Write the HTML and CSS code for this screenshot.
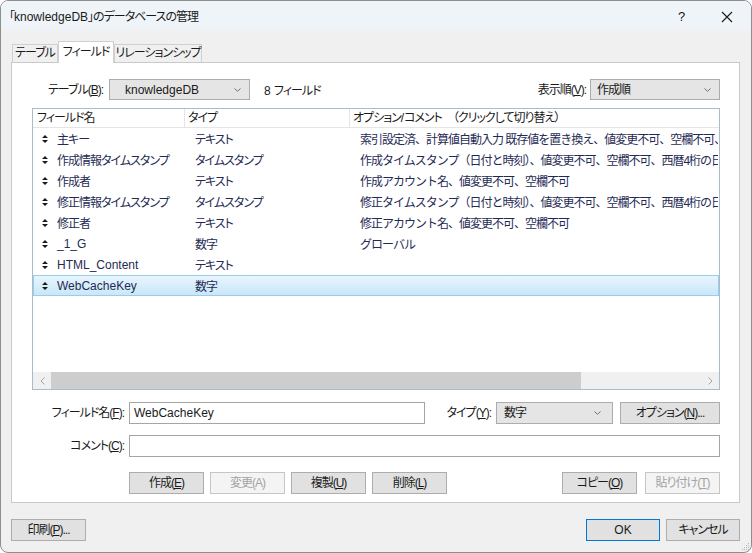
FILE: index.html
```html
<!DOCTYPE html>
<html lang="ja">
<head>
    <meta charset="UTF-8">
    <title>データベースの管理</title>
    <link rel="stylesheet" href="styles.css">
</head>
<body>
    <div class="window">
        <div class="titlebar">
            <span class="title">「<span class="en">knowledgeDB</span>」のデータベースの管理</span>
            <span class="tb-btn help">?</span>
            <span class="tb-btn close">
                <svg width="12" height="12" viewBox="0 0 12 12"><path d="M1 1L11 11M11 1L1 11" stroke="#1a1a1a" stroke-width="1.1"/></svg>
            </span>
        </div>
        <div class="body">
            <div class="tabs">
                <div class="tab">テーブル</div>
                <div class="tab active">フィールド</div>
                <div class="tab">リレーションシップ</div>
            </div>
            <div class="panel">
                <div class="top-row">
                    <span class="lbl table-lbl">テーブル(<u>B</u>):</span>
                    <div class="combo table-combo">
                        <span class="en">knowledgeDB</span>
                        <svg class="chev" width="7" height="4" viewBox="0 0 7 4"><path d="M0.5 0.5L3.5 3.3L6.5 0.5" fill="none" stroke="#707070"/></svg>
                    </div>
                    <span class="count"><span class="en">8 </span>フィールド</span>
                    <span class="lbl order-lbl">表示順(<u>V</u>):</span>
                    <div class="combo order-combo">
                        <span>作成順</span>
                        <svg class="chev" width="7" height="4" viewBox="0 0 7 4"><path d="M0.5 0.5L3.5 3.3L6.5 0.5" fill="none" stroke="#707070"/></svg>
                    </div>
                </div>

                <div class="list">
                    <div class="list-head">
                        <div class="c1">フィールド名</div>
                        <div class="c2">タイプ</div>
                        <div class="c3">オプション<span class="en">/</span>コメント　（クリックして切り替え）</div>
                    </div>
                    <div class="rows">
                        <div class="row">
                            <div class="c1"><svg class="grip" width="6" height="8" viewBox="0 0 6 8"><path d="M3 0L6 3H0Z M0 5H6L3 8Z" fill="#1a1a1a"/></svg>主キー</div>
                            <div class="c2">テキスト</div>
                            <div class="c3">索引設定済、計算値自動入力 既存値を置き換え、値変更不可、空欄不可、一意の値</div>
                        </div>
                        <div class="row">
                            <div class="c1"><svg class="grip" width="6" height="8" viewBox="0 0 6 8"><path d="M3 0L6 3H0Z M0 5H6L3 8Z" fill="#1a1a1a"/></svg>作成情報タイムスタンプ</div>
                            <div class="c2">タイムスタンプ</div>
                            <div class="c3">作成タイムスタンプ（日付と時刻）、値変更不可、空欄不可、西暦4桁の日付</div>
                        </div>
                        <div class="row">
                            <div class="c1"><svg class="grip" width="6" height="8" viewBox="0 0 6 8"><path d="M3 0L6 3H0Z M0 5H6L3 8Z" fill="#1a1a1a"/></svg>作成者</div>
                            <div class="c2">テキスト</div>
                            <div class="c3">作成アカウント名、値変更不可、空欄不可</div>
                        </div>
                        <div class="row">
                            <div class="c1"><svg class="grip" width="6" height="8" viewBox="0 0 6 8"><path d="M3 0L6 3H0Z M0 5H6L3 8Z" fill="#1a1a1a"/></svg>修正情報タイムスタンプ</div>
                            <div class="c2">タイムスタンプ</div>
                            <div class="c3">修正タイムスタンプ（日付と時刻）、値変更不可、空欄不可、西暦4桁の日付</div>
                        </div>
                        <div class="row">
                            <div class="c1"><svg class="grip" width="6" height="8" viewBox="0 0 6 8"><path d="M3 0L6 3H0Z M0 5H6L3 8Z" fill="#1a1a1a"/></svg>修正者</div>
                            <div class="c2">テキスト</div>
                            <div class="c3">修正アカウント名、値変更不可、空欄不可</div>
                        </div>
                        <div class="row">
                            <div class="c1"><svg class="grip" width="6" height="8" viewBox="0 0 6 8"><path d="M3 0L6 3H0Z M0 5H6L3 8Z" fill="#1a1a1a"/></svg><span class="en">_1_G</span></div>
                            <div class="c2">数字</div>
                            <div class="c3">グローバル</div>
                        </div>
                        <div class="row">
                            <div class="c1"><svg class="grip" width="6" height="8" viewBox="0 0 6 8"><path d="M3 0L6 3H0Z M0 5H6L3 8Z" fill="#1a1a1a"/></svg><span class="en">HTML_Content</span></div>
                            <div class="c2">テキスト</div>
                            <div class="c3"></div>
                        </div>
                        <div class="row selected">
                            <div class="c1"><svg class="grip" width="6" height="8" viewBox="0 0 6 8"><path d="M3 0L6 3H0Z M0 5H6L3 8Z" fill="#1a1a1a"/></svg><span class="en">WebCacheKey</span></div>
                            <div class="c2">数字</div>
                            <div class="c3"></div>
                        </div>
                    </div>
                    <div class="hscroll">
                        <div class="arrow">
                            <svg width="5" height="8" viewBox="0 0 5 8"><path d="M4.5 0.5L1 4L4.5 7.5" fill="none" stroke="#a6a6a6"/></svg>
                        </div>
                        <div class="track"><div class="thumb"></div></div>
                        <div class="arrow">
                            <svg width="5" height="8" viewBox="0 0 5 8"><path d="M0.5 0.5L4 4L0.5 7.5" fill="none" stroke="#a6a6a6"/></svg>
                        </div>
                    </div>
                </div>

                <div class="form-row">
                    <span class="lbl form-lbl">フィールド名(<u>F</u>):</span>
                    <div class="input name-input"><span class="en">WebCacheKey</span></div>
                    <span class="lbl type-lbl">タイプ(<u>Y</u>):</span>
                    <div class="combo type-combo">
                        <span>数字</span>
                        <svg class="chev" width="7" height="4" viewBox="0 0 7 4"><path d="M0.5 0.5L3.5 3.3L6.5 0.5" fill="none" stroke="#707070"/></svg>
                    </div>
                    <button class="btn options-btn">オプション(<u>N</u>)...</button>
                </div>

                <div class="form-row">
                    <span class="lbl form-lbl">コメント(<u>C</u>):</span>
                    <div class="input comment-input"></div>
                </div>

                <div class="btn-row">
                    <button class="btn">作成(<u>E</u>)</button>
                    <button class="btn" disabled>変更(A)</button>
                    <button class="btn">複製(<u>U</u>)</button>
                    <button class="btn">削除(<u>L</u>)</button>
                    <button class="btn copy-btn">コピー(<u>O</u>)</button>
                    <button class="btn" disabled>貼り付け(<u>T</u>)</button>
                </div>
            </div>

            <div class="footer">
                <button class="btn">印刷(<u>P</u>)...</button>
                <button class="btn ok-btn"><span class="en">OK</span></button>
                <button class="btn">キャンセル</button>
            </div>
        </div>
        <svg class="size-grip" width="9" height="9" viewBox="0 0 9 9">
            <g fill="#b5b5b5">
                <rect x="7" y="1" width="1" height="1"/>
                <rect x="5" y="3" width="1" height="1"/><rect x="7" y="3" width="1" height="1"/>
                <rect x="3" y="5" width="1" height="1"/><rect x="5" y="5" width="1" height="1"/><rect x="7" y="5" width="1" height="1"/>
                <rect x="1" y="7" width="1" height="1"/><rect x="3" y="7" width="1" height="1"/><rect x="5" y="7" width="1" height="1"/><rect x="7" y="7" width="1" height="1"/>
            </g>
        </svg>
    </div>
</body>
</html>
```

FILE: styles.css
```css
* {
    margin: 0;
    padding: 0;
    box-sizing: border-box;
}

body {
    width: 752px;
    height: 553px;
    overflow: hidden;
    background: #ffffff;
    font-family: "Liberation Sans", "Noto Sans CJK JP", sans-serif;
    font-size: 12px;
    font-feature-settings: "palt";
    letter-spacing: -1px;
    color: #1a1a1a;
}

/* latin words keep normal spacing */
.en {
    letter-spacing: 0;
}

u {
    text-decoration: underline;
    text-underline-offset: 1px;
}

.window {
    position: relative;
    width: 752px;
    height: 553px;
    border: 1px solid #8e8e8e;
    border-radius: 8px;
    background: #f0f0f0;
    overflow: hidden;
    display: flex;
    flex-direction: column;
}

/* title bar */
.titlebar {
    height: 33px;
    display: flex;
    align-items: center;
    padding-left: 8px;
    background: linear-gradient(#eff4f9, #eff4f9 75%, #f0f0f0);
}

.title {
    flex: 1;
    line-height: 16px;
    margin-top: -2px;
}

.tb-btn {
    display: flex;
    align-items: center;
    justify-content: center;
    width: 44px;
    height: 30px;
    margin-top: -2px;
}

.help {
    font-size: 13px;
    margin-right: 2px;
}

.close {
    margin-right: 2px;
}

/* tabs */
.body {
    flex: 1;
    padding: 7px 11px 0 10px;
    display: flex;
    flex-direction: column;
}

.tabs {
    display: flex;
    align-items: flex-end;
    height: 21px;
    padding-left: 1px;
}

.tab {
    height: 18px;
    line-height: 16px;
    border: 1px solid #d0d0d0;
    border-bottom: none;
    background: #f0f0f0;
    white-space: nowrap;
    text-align: center;
}

.tab:first-child {
    width: 46px;
}

.tab.active {
    position: relative;
    width: 56px;
    height: 22px;
    line-height: 20px;
    margin-bottom: -1px;
    background: #ffffff;
    z-index: 1;
}

.tab:last-child {
    width: 88px;
}

.panel {
    background: #ffffff;
    border: 1px solid #c9c9c9;
    padding: 16px 19px 8px 20px;
}

/* top row */
.top-row {
    display: flex;
    align-items: center;
    height: 21px;
}

.lbl {
    line-height: 16px;
    white-space: nowrap;
}

.table-lbl {
    margin-left: 16px;
    width: 61px;
}

.combo {
    display: flex;
    align-items: center;
    height: 21px;
    background: #e5e5e5;
    border: 1px solid #acacac;
    line-height: 16px;
}

.combo span {
    flex: 1;
}

.chev {
    margin-right: 8px;
}

.table-combo {
    width: 141px;
    padding-left: 15px;
}

.count {
    margin-left: 14px;
    flex: 1;
}

.count .en {
    flex: none;
}

.order-lbl {
    margin-right: 4px;
}

.order-combo {
    width: 130px;
    padding-left: 6px;
}

/* field list */
.list {
    margin-top: 8px;
    height: 282px;
    border: 1px solid #a9bccb;
    display: flex;
    flex-direction: column;
    overflow: hidden;
}

.list-head {
    display: flex;
    height: 19px;
    line-height: 18px;
    border-bottom: 1px solid #e5e5e5;
    white-space: nowrap;
}

.list-head .c1 {
    width: 152px;
    padding-left: 4px;
    border-right: 1px solid #e5e5e5;
}

.list-head .c2 {
    width: 165px;
    padding-left: 3px;
    border-right: 1px solid #e5e5e5;
}

.list-head .c3 {
    padding-left: 3px;
}

.rows {
    flex: 1;
    overflow: hidden;
}

.row {
    display: flex;
    align-items: center;
    height: 21px;
    border: 1px solid transparent;
    color: #1f2b55;
    white-space: nowrap;
}

.row.selected {
    border-color: #99cdec;
    background: linear-gradient(#e8f5fd, #c9e7f8);
}

.row .c1 {
    width: 151px;
    padding-left: 8px;
    display: flex;
    align-items: center;
}

.grip {
    margin-right: 9px;
}

.row .c2 {
    width: 165px;
    padding-left: 10px;
}

/* option text keeps full-width punctuation */
.row .c3 {
    flex: 1;
    padding-left: 10px;
    overflow: hidden;
    font-feature-settings: normal;
}

.hscroll {
    display: flex;
    height: 17px;
    background: #f0f0f0;
}

.arrow {
    width: 18px;
    display: flex;
    align-items: center;
    justify-content: center;
}

.track {
    flex: 1;
}

.thumb {
    width: 530px;
    height: 17px;
    background: #cdcdcd;
}

/* edit rows */
.form-row {
    display: flex;
    align-items: center;
    height: 22px;
    margin-top: 12px;
}

.form-row + .form-row {
    margin-top: 11px;
}

.form-lbl {
    width: 92px;
    margin-right: 5px;
    text-align: right;
}

.input {
    height: 22px;
    border: 1px solid #a5a5a5;
    background: #ffffff;
    padding-left: 4px;
    line-height: 20px;
}

.name-input {
    width: 296px;
}

.comment-input {
    flex: 1;
}

.type-lbl {
    width: 66px;
    margin-right: 5px;
    text-align: right;
}

.type-combo {
    width: 117px;
    padding-left: 7px;
    height: 22px;
}

.type-combo .chev {
    margin-right: 11px;
}

.btn {
    height: 22px;
    width: 75px;
    border: 1px solid #adadad;
    background: #e1e1e1;
    font: inherit;
    font-feature-settings: "palt";
    letter-spacing: -1px;
    color: #1a1a1a;
    line-height: 18px;
    white-space: nowrap;
}

.btn:disabled {
    background: #f4f4f4;
    border-color: #c6c6c6;
    color: #a3a3a3;
}

.options-btn {
    width: 100px;
    margin-left: 7px;
}

.btn-row {
    display: flex;
    gap: 6px;
    margin-top: 15px;
    padding-left: 97px;
}

.copy-btn {
    margin-left: auto;
    margin-right: 2px;
}

/* bottom buttons */
.footer {
    display: flex;
    gap: 6px;
    margin-top: 16px;
}

.footer .btn:first-child {
    margin-right: auto;
}

.ok-btn {
    width: 74px;
    border-color: #0078d7;
}

.footer .btn:last-child {
    width: 74px;
}

.size-grip {
    position: absolute;
    right: 1px;
    bottom: 1px;
}
```
